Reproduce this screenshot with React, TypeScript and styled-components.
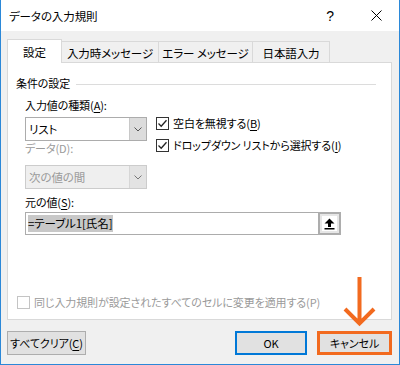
import React from 'react';
import styled, { createGlobalStyle } from 'styled-components';

const GlobalStyle = createGlobalStyle`
  html, body {
    margin: 0;
    padding: 0;
    background: #ffffff;
  }
  body {
    font-family: 'Noto Sans CJK JP', 'Noto Sans', sans-serif;
    font-size: 11px;
    letter-spacing: -0.1px;
    color: #000000;
    font-feature-settings: 'palt';
  }
`;

const ORANGE = '#f26a1f';

const Window = styled.div`
  position: relative;
  width: 400px;
  height: 365px;
  box-sizing: border-box;
  border: 1px solid #2b88d8;
  border-top: none;
  display: flex;
  flex-direction: column;
  overflow: hidden;
`;

const TitleBar = styled.div`
  height: 31px;
  flex-shrink: 0;
  background: #ffffff;
  display: flex;
  align-items: center;
  padding-left: 8px;
`;

const TitleText = styled.div`
  flex: 1;
  font-size: 11.5px;
  line-height: 16px;
`;

const TitleButton = styled.div`
  width: 46px;
  height: 31px;
  display: flex;
  align-items: center;
  justify-content: center;
  font-family: 'Liberation Sans', sans-serif;
  font-size: 14px;
`;

const Body = styled.div`
  flex: 1;
  background: #f0f0f0;
  padding: 8px 7px 0 6px;
  display: flex;
  flex-direction: column;
`;

const TabRow = styled.div`
  display: flex;
  align-items: flex-end;
  height: 23px;
`;

const Tab = styled.div<{ $active?: boolean; $width: number }>`
  position: relative;
  box-sizing: border-box;
  width: ${p => p.$width}px;
  height: ${p => (p.$active ? 24 : 21)}px;
  margin-bottom: ${p => (p.$active ? -1 : 0)}px;
  margin-left: ${p => (p.$active ? 0 : -1)}px;
  background: ${p => (p.$active ? '#ffffff' : '#f0f0f0')};
  border: 1px solid #d9d9d9;
  border-bottom: none;
  z-index: ${p => (p.$active ? 2 : 1)};
  display: flex;
  align-items: center;
  justify-content: center;
  white-space: nowrap;
  font-size: 11.5px;
  padding-top: ${p => (p.$active ? 0 : 1)}px;
  &:first-child {
    margin-left: 0;
  }
`;

const Panel = styled.div`
  box-sizing: border-box;
  height: 258px;
  background: #ffffff;
  border: 1px solid #d9d9d9;
  padding: 12px 8px 9px 8px;
  display: flex;
  flex-direction: column;
`;

const GroupHeader = styled.div`
  display: flex;
  align-items: center;
  height: 16px;
  line-height: 16px;
`;

const GroupLine = styled.div`
  flex: 1;
  height: 1px;
  background: #dcdcdc;
  margin: 2px 7px 0 6px;
`;

const Fields = styled.div`
  padding-left: 9px;
  display: flex;
  flex-direction: column;
`;

const FormRow = styled.div`
  display: flex;
  gap: 9px;
`;

const Column = styled.div<{ $top?: number }>`
  display: flex;
  flex-direction: column;
  margin-top: ${p => p.$top ?? 0}px;
`;

const FieldLabel = styled.div<{ $top: number; $disabled?: boolean }>`
  line-height: 14px;
  height: 14px;
  margin-top: ${p => p.$top}px;
  color: ${p => (p.$disabled ? '#9a9a9a' : '#000000')};
  white-space: nowrap;
`;

const Key = styled.span`
  text-decoration: underline;
  text-underline-offset: 2px;
`;

const Select = styled.div<{ $top: number; $disabled?: boolean }>`
  box-sizing: border-box;
  width: 122px;
  height: 24px;
  margin-top: ${p => p.$top}px;
  border: 1px solid ${p => (p.$disabled ? '#cccccc' : '#acacac')};
  background: ${p => (p.$disabled ? '#efefef' : '#ffffff')};
  color: ${p => (p.$disabled ? '#9a9a9a' : '#000000')};
  display: flex;
`;

const SelectValue = styled.div`
  flex: 1;
  padding-left: 3px;
  display: flex;
  align-items: center;
  font-size: 11.5px;
`;

const DropButton = styled.div<{ $disabled?: boolean }>`
  width: 16px;
  background: ${p => (p.$disabled ? '#e3e3e3' : '#dcdcdc')};
  border-left: 1px solid ${p => (p.$disabled ? '#d6d6d6' : '#c8c8c8')};
  display: flex;
  align-items: center;
  justify-content: center;
`;

const CheckRow = styled.div<{ $top?: number; $disabled?: boolean }>`
  display: flex;
  align-items: center;
  height: 16px;
  margin-top: ${p => p.$top ?? 0}px;
  gap: 4px;
  white-space: nowrap;
  color: ${p => (p.$disabled ? '#9a9a9a' : '#000000')};
`;

const Box = styled.div<{ $disabled?: boolean }>`
  box-sizing: border-box;
  width: 13px;
  height: 13px;
  border: 1px solid ${p => (p.$disabled ? '#c4c4c4' : '#333333')};
  background: #ffffff;
  display: flex;
  align-items: center;
  justify-content: center;
  flex-shrink: 0;
`;

const InputBox = styled.div`
  box-sizing: border-box;
  width: 316px;
  height: 23px;
  margin-top: 3px;
  border: 1px solid #acacac;
  display: flex;
  background: #ffffff;
`;

const InputText = styled.div`
  flex: 1;
  padding-left: 2px;
  display: flex;
  align-items: center;
  font-size: 11.5px;
`;

const Selection = styled.span`
  background: #c8c8c8;
  line-height: 17px;
  padding-right: 1px;
`;

const RefButton = styled.div`
  box-sizing: border-box;
  width: 23px;
  margin: -1px -1px -1px 0;
  border: 2px solid #adadad;
  background: #e6e6e6;
  padding: 2px;
  display: flex;
`;

const RefInner = styled.div`
  flex: 1;
  background: #ffffff;
  display: flex;
  align-items: center;
  justify-content: center;
`;

const Spacer = styled.div`
  flex: 1;
`;

const BottomCheck = styled.div`
  padding-left: 1px;
`;

const Footer = styled.div`
  display: flex;
  padding-top: 11px;
`;

const Button = styled.div<{ $width: number; $tone?: 'default' | 'focus' | 'mark' }>`
  box-sizing: border-box;
  width: ${p => p.$width}px;
  height: 24px;
  background: #e1e1e1;
  border: ${p =>
    p.$tone === 'focus'
      ? '2px solid #0078d7'
      : p.$tone === 'mark'
        ? `3px solid ${ORANGE}`
        : '1px solid #adadad'};
  display: flex;
  align-items: center;
  justify-content: center;
  white-space: nowrap;
  & + & {
    margin-left: 10px;
  }
`;

const PushRight = styled.div`
  flex: 1;
`;

const Arrow = styled.svg`
  position: absolute;
  left: 342px;
  top: 277px;
`;

const Chevron = ({ color }: { color: string }) => (
  <svg width="8" height="5" viewBox="0 0 8 5">
    <path d="M0.5 0.5 L4 4 L7.5 0.5" fill="none" stroke={color} strokeWidth="1" />
  </svg>
);

const Check = () => (
  <svg width="11" height="11" viewBox="0 0 11 11">
    <path d="M1.5 5.5 L4.2 8.2 L9.5 2.2" fill="none" stroke="#222" strokeWidth="1.3" />
  </svg>
);

export default function App() {
  return (
    <>
      <GlobalStyle />
      <Window>
        <TitleBar>
          <TitleText>データの入力規則</TitleText>
          <TitleButton>?</TitleButton>
          <TitleButton>
            <svg width="11" height="11" viewBox="0 0 11 11">
              <path d="M0.5 0.5 L10.5 10.5 M10.5 0.5 L0.5 10.5" stroke="#000" strokeWidth="1" />
            </svg>
          </TitleButton>
        </TitleBar>
        <Body>
          <TabRow>
            <Tab $active $width={55}>設定</Tab>
            <Tab $width={98}>入力時メッセージ</Tab>
            <Tab $width={95}>エラー メッセージ</Tab>
            <Tab $width={78}>日本語入力</Tab>
          </TabRow>
          <Panel>
            <GroupHeader>
              条件の設定
              <GroupLine />
            </GroupHeader>
            <Fields>
              <FormRow>
                <Column>
                  <FieldLabel $top={7}>
                    入力値の種類(<Key>A</Key>):
                  </FieldLabel>
                  <Select $top={5}>
                    <SelectValue>リスト</SelectValue>
                    <DropButton>
                      <Chevron color="#555" />
                    </DropButton>
                  </Select>
                  <FieldLabel $top={0} $disabled>
                    データ(D):
                  </FieldLabel>
                  <Select $top={10} $disabled>
                    <SelectValue>次の値の間</SelectValue>
                    <DropButton $disabled>
                      <Chevron color="#777" />
                    </DropButton>
                  </Select>
                </Column>
                <Column $top={24}>
                  <CheckRow>
                    <Box>
                      <Check />
                    </Box>
                    <span>
                      空白を無視する(<Key>B</Key>)
                    </span>
                  </CheckRow>
                  <CheckRow $top={6}>
                    <Box>
                      <Check />
                    </Box>
                    <span>
                      ドロップダウン リストから選択する(<Key>I</Key>)
                    </span>
                  </CheckRow>
                </Column>
              </FormRow>
              <FieldLabel $top={6}>
                元の値(<Key>S</Key>):
              </FieldLabel>
              <InputBox>
                <InputText>
                  <Selection>=テーブル1[氏名]</Selection>
                </InputText>
                <RefButton>
                  <RefInner>
                    <svg width="11" height="12" viewBox="0 0 11 12">
                      <path d="M5.5 0.5 L10.5 5.5 L7 5.5 L7 9 L4 9 L4 5.5 L0.5 5.5 Z" fill="#000" />
                      <rect x="0.5" y="10" width="10" height="1.5" fill="#000" />
                    </svg>
                  </RefInner>
                </RefButton>
              </InputBox>
            </Fields>
            <Spacer />
            <BottomCheck>
              <CheckRow $disabled>
                <Box $disabled />
                <span>同じ入力規則が設定されたすべてのセルに変更を適用する(P)</span>
              </CheckRow>
            </BottomCheck>
          </Panel>
          <Footer>
            <Button $width={79}>
              すべてクリア(<Key>C</Key>)
            </Button>
            <PushRight />
            <Button $width={72} $tone="focus">
              OK
            </Button>
            <Button $width={75} $tone="mark">
              キャンセル
            </Button>
          </Footer>
        </Body>
        <Arrow width="34" height="50" viewBox="0 0 34 50">
          <path
            d="M16.5 0 L16.5 46 M2 32 L16.5 46.5 L31 32"
            fill="none"
            stroke={ORANGE}
            strokeWidth="4"
          />
        </Arrow>
      </Window>
    </>
  );
}
